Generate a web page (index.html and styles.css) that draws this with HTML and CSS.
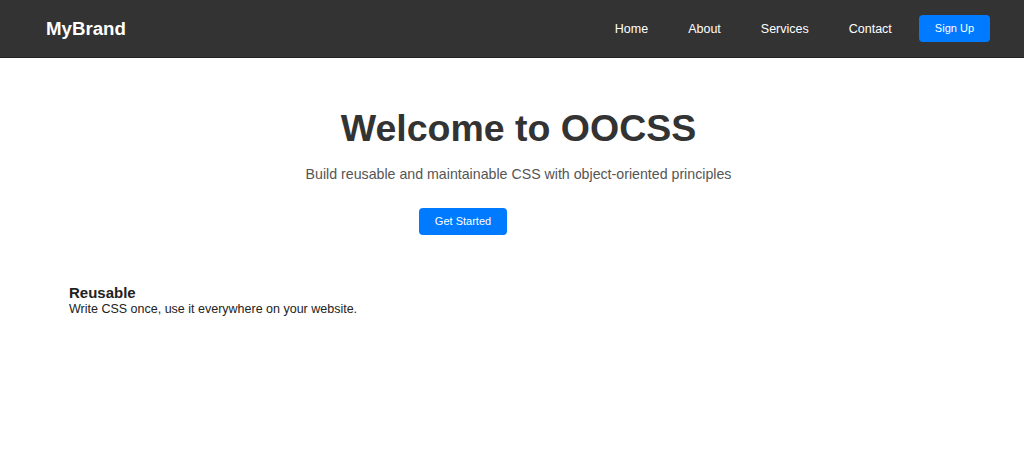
FILE: index.html
```html
<!DOCTYPE html>
<html lang="en">
<head>
    <meta charset="UTF-8">
    <meta name="viewport" content="width=device-width, initial-scale=1.0">
    <title>OOCSS Demo</title>
    <link rel="stylesheet" href="styles.css">
</head>
<body>
    <header class="navbar">
        <div class="brand">MyBrand</div>
        <nav class="nav-links">
            <a href="#" class="nav-link">Home</a>
            <a href="#" class="nav-link">About</a>
            <a href="#" class="nav-link">Services</a>
            <a href="#" class="nav-link">Contact</a>
            <a href="#" class="btn btn-primary">Sign Up</a>
        </nav>
    </header>

    <section class="hero">
        <h1 class="hero-title">Welcome to OOCSS</h1>
        <p class="hero-text">Build reusable and maintainable CSS with object-oriented principles</p>
        <div class="hero-actions">
            <a href="#" class="btn btn-primary">Get Started</a>
        </div>
    </section>

    <section class="features">
        <div class="feature">
            <h3 class="feature-title">Reusable</h3>
            <p class="feature-text">Write CSS once, use it everywhere on your website.</p>
        </div>
    </section>
</body>
</html>
```

FILE: styles.css
```css
/* Base */
body {
    margin: 0;
    font-family: "Liberation Sans", Arial, sans-serif;
    color: #333;
    background-color: #fff;
}

/* Navbar */
.navbar {
    display: flex;
    justify-content: space-between;
    align-items: center;
    height: 58px;
    padding: 0 34px 0 46px;
    background-color: #333;
    border-bottom: 1px solid #222;
    box-sizing: border-box;
}
.brand {
    color: #fff;
    font-size: 18.7px;
    font-weight: bold;
}
.nav-links {
    display: flex;
    align-items: center;
    gap: 27px;
}
.nav-link {
    color: #fff;
    text-decoration: none;
    font-size: 12.5px;
    margin-left: 13px;
}

/* Buttons */
.btn {
    display: inline-block;
    padding: 7px 16px;
    border-radius: 4px;
    color: #fff;
    text-decoration: none;
    font-size: 11px;
    line-height: 13px;
}
.btn-primary {
    background-color: #007bff;
}

/* Hero */
.hero {
    text-align: center;
    padding: 48px 0 0 13px;
}
.hero-title {
    margin: 0;
    font-size: 37.5px;
    line-height: 44px;
    color: #333;
}
.hero-text {
    margin: 16px 0 0;
    font-size: 14.2px;
    line-height: 16px;
    color: #555;
}
.hero-actions {
    margin-top: 26px;
}
.hero-actions .btn {
    margin-right: 111px;
}

/* Features */
.features {
    padding: 49px 69px;
}
.feature-title {
    margin: 0;
    font-size: 15px;
    line-height: 17px;
    color: #222;
}
.feature-text {
    margin: 0;
    font-size: 12.5px;
    line-height: 16px;
    color: #222;
}
```
